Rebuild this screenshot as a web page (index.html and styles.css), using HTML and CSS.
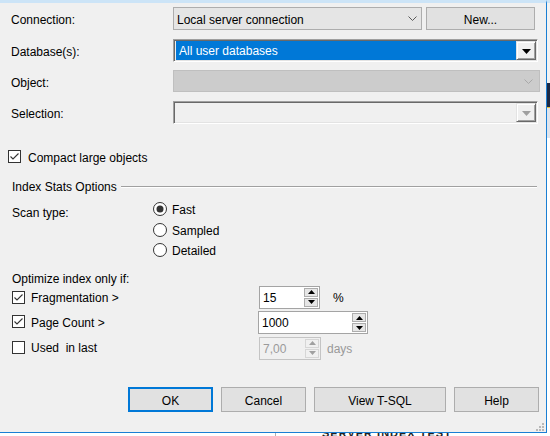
FILE: index.html
```html
<!DOCTYPE html>
<html>
<head>
<meta charset="utf-8">
<link rel="stylesheet" href="styles.css">
</head>
<body>
<div class="screen">
  <div class="main">
    <div class="dialog">
      <div class="form">
        <div class="lbl">Connection:</div>
        <div class="conn-row">
          <div class="combo flat">
            <span class="ctext">Local server connection</span>
            <svg class="chev" width="9" height="5" viewBox="0 0 9 5"><path d="M0.5 0.5 L4.5 4.5 L8.5 0.5" fill="none" stroke="#5a5a5a"/></svg>
          </div>
          <div class="btn new"><span class="btext">New...</span></div>
        </div>

        <div class="lbl">Database(s):</div>
        <div class="combo3d">
          <div class="selected">All user databases</div>
          <div class="ddbtn"><svg width="9" height="5" viewBox="0 0 9 5"><path d="M0 0 H9 L4.5 5 Z" fill="#000"/></svg></div>
        </div>

        <div class="lbl">Object:</div>
        <div class="combo disabled">
          <svg class="chev" width="9" height="5" viewBox="0 0 9 5"><path d="M0.5 0.5 L4.5 4.5 L8.5 0.5" fill="none" stroke="#a8a8a8"/></svg>
        </div>

        <div class="lbl">Selection:</div>
        <div class="combo3d">
          <div class="empty"></div>
          <div class="ddbtn"><svg width="9" height="5" viewBox="0 0 9 5"><path d="M0 0 H9 L4.5 5 Z" fill="#a0a0a0"/></svg></div>
        </div>
      </div>

      <div class="check-row compact">
        <svg class="cb" width="13" height="13" viewBox="0 0 13 13"><rect x="0.5" y="0.5" width="12" height="12" fill="#fff" stroke="#333"/><path d="M2.5 6.5 L5 9 L10.5 3.5" fill="none" stroke="#333" stroke-width="1.1"/></svg>
        <span class="t1">Compact large objects</span>
      </div>

      <div class="group-head">
        <span class="t1">Index Stats Options</span>
        <div class="rule"></div>
      </div>

      <div class="scan">
        <div class="scan-lbl">Scan type:</div>
        <div class="radios">
          <div class="radio">
            <svg width="14" height="14" viewBox="0 0 14 14"><circle cx="7" cy="7" r="6.5" fill="#fff" stroke="#333"/><circle cx="7" cy="7" r="3.5" fill="#333"/></svg>
            <span class="t1">Fast</span>
          </div>
          <div class="radio mid">
            <svg width="14" height="14" viewBox="0 0 14 14"><circle cx="7" cy="7" r="6.5" fill="#fff" stroke="#333"/></svg>
            <span class="t1">Sampled</span>
          </div>
          <div class="radio">
            <svg width="14" height="14" viewBox="0 0 14 14"><circle cx="7" cy="7" r="6.5" fill="#fff" stroke="#333"/></svg>
            <span class="t1">Detailed</span>
          </div>
        </div>
      </div>

      <div class="opt-lbl">Optimize index only if:</div>

      <div class="options">
        <div class="check-row opt">
          <svg class="cb" width="13" height="13" viewBox="0 0 13 13"><rect x="0.5" y="0.5" width="12" height="12" fill="#fff" stroke="#333"/><path d="M2.5 6.5 L5 9 L10.5 3.5" fill="none" stroke="#333" stroke-width="1.1"/></svg>
          <span class="t1">Fragmentation &gt;</span>
        </div>
        <div class="spin-cell">
          <div class="spin w61">
            <div class="val">15</div>
            <div class="arrows">
              <div class="arr"><svg width="7" height="4" viewBox="0 0 7 4"><path d="M0 4 H7 L3.5 0 Z" fill="#000"/></svg></div>
              <div class="arr"><svg width="7" height="4" viewBox="0 0 7 4"><path d="M0 0 H7 L3.5 4 Z" fill="#000"/></svg></div>
            </div>
          </div>
          <span class="unit pct">%</span>
        </div>

        <div class="check-row opt r2">
          <svg class="cb" width="13" height="13" viewBox="0 0 13 13"><rect x="0.5" y="0.5" width="12" height="12" fill="#fff" stroke="#333"/><path d="M2.5 6.5 L5 9 L10.5 3.5" fill="none" stroke="#333" stroke-width="1.1"/></svg>
          <span class="t1">Page Count &gt;</span>
        </div>
        <div class="spin-cell">
          <div class="spin w110">
            <div class="val">1000</div>
            <div class="arrows">
              <div class="arr"><svg width="7" height="4" viewBox="0 0 7 4"><path d="M0 4 H7 L3.5 0 Z" fill="#000"/></svg></div>
              <div class="arr"><svg width="7" height="4" viewBox="0 0 7 4"><path d="M0 0 H7 L3.5 4 Z" fill="#000"/></svg></div>
            </div>
          </div>
        </div>

        <div class="check-row opt r3">
          <svg class="cb" width="13" height="13" viewBox="0 0 13 13"><rect x="0.5" y="0.5" width="12" height="12" fill="#fff" stroke="#333"/></svg>
          <span class="t1">Used&nbsp; in last</span>
        </div>
        <div class="spin-cell">
          <div class="spin w62 off">
            <div class="val">7,00</div>
            <div class="arrows">
              <div class="arr"><svg width="7" height="4" viewBox="0 0 7 4"><path d="M0 4 H7 L3.5 0 Z" fill="#a0a0a0"/></svg></div>
              <div class="arr"><svg width="7" height="4" viewBox="0 0 7 4"><path d="M0 0 H7 L3.5 4 Z" fill="#a0a0a0"/></svg></div>
            </div>
          </div>
          <span class="unit days">days</span>
        </div>
      </div>

      <div class="buttons">
        <div class="btn dlg default"><span class="btext">OK</span></div>
        <div class="btn dlg"><span class="btext">Cancel</span></div>
        <div class="btn dlg wide"><span class="btext">View T-SQL</span></div>
        <div class="btn dlg"><span class="btext">Help</span></div>
      </div>

      <svg class="grip" width="8" height="8" viewBox="0 0 8 8">
        <rect x="6" y="0" width="2" height="2" fill="#b8b8b8"/>
        <rect x="3" y="3" width="2" height="2" fill="#b8b8b8"/>
        <rect x="6" y="3" width="2" height="2" fill="#b8b8b8"/>
        <rect x="0" y="6" width="2" height="2" fill="#b8b8b8"/>
        <rect x="3" y="6" width="2" height="2" fill="#b8b8b8"/>
        <rect x="6" y="6" width="2" height="2" fill="#b8b8b8"/>
      </svg>
    </div>
    <div class="side">
      <div class="s-top"></div>
      <div class="s-light"></div>
      <div class="s-navy"></div>
      <div class="s-blue"></div>
      <div class="s-white"></div>
    </div>
  </div>
  <div class="bottom">
    <div class="b-left"></div>
    <div class="b-right"><span class="b-text">SERVER INDEX TEST</span></div>
  </div>
</div>
</body>
</html>
```

FILE: styles.css
```css
* { box-sizing: border-box; }
html, body { margin: 0; padding: 0; }
body {
  font-family: "Liberation Sans", Arial, sans-serif;
  font-size: 12px;
  color: #000;
  background: #fff;
}
.screen {
  width: 550px;
  height: 436px;
  overflow: hidden;
  display: flex;
  flex-direction: column;
}
.main {
  display: flex;
  height: 433px;
}
.dialog {
  position: relative;
  width: 547px;
  height: 433px;
  background: #f0f0f0;
  border-top: 3px solid #cce4f7;
  border-right: 1px solid #1a7fd4;
  border-bottom: 1px solid #1a7fd4;
}
.t1 { position: relative; top: 1px; }
.btext { position: relative; top: 1px; }

/* top form */
.form {
  display: grid;
  grid-template-columns: 162px auto;
  grid-template-rows: 32px 31px 31px 24px;
  align-items: start;
  padding: 4px 0 0 11px;
}
.lbl {
  line-height: 23px;
  height: 23px;
  padding-top: 2px;
}
.conn-row { display: flex; }
.combo {
  display: flex;
  align-items: center;
  justify-content: space-between;
  height: 23px;
  border: 1px solid #adadad;
  padding: 0 4px 0 3px;
}
.ctext { position: relative; top: 1px; }
.combo.flat {
  width: 249px;
  background: #e5e5e5;
}
.combo.disabled {
  width: 367px;
  height: 22px;
  background: #cccccc;
  border-color: #bfbfbf;
  justify-content: flex-end;
  padding-right: 6px;
}
.chev { display: block; }
.btn {
  display: flex;
  align-items: center;
  justify-content: center;
  background: #e1e1e1;
  border: 1px solid #adadad;
}
.btn.new {
  width: 109px;
  height: 23px;
  margin-left: 4px;
}
.combo3d {
  display: flex;
  width: 365px;
  height: 23px;
  border: 1px solid;
  border-color: #a0a0a0 #ffffff #ffffff #a0a0a0;
  box-shadow: inset 1px 1px 0 #696969, inset -1px -1px 0 #e3e3e3;
  padding: 1px;
  background: #f0f0f0;
}
.selected {
  flex: 1;
  margin-left: 1px;
  background: #0078d7;
  color: #fff;
  line-height: 19px;
  padding: 1px 0 0 3px;
}
.empty { flex: 1; }
.ddbtn {
  width: 20px;
  height: 19px;
  display: flex;
  align-items: center;
  justify-content: center;
  background: #f0f0f0;
  border: 1px solid;
  border-color: #e3e3e3 #696969 #696969 #e3e3e3;
  box-shadow: inset 1px 1px 0 #ffffff, inset -1px -1px 0 #a0a0a0;
}
.ddbtn svg { display: block; margin-top: 1px; }

/* checkboxes */
.check-row {
  display: flex;
  align-items: center;
}
.cb { display: block; flex: none; }
.compact {
  margin-top: 25px;
  height: 13px;
  padding-left: 8px;
  gap: 7px;
}

/* group header */
.group-head {
  display: flex;
  align-items: center;
  margin: 16px 9px 0 12px;
  height: 14px;
  gap: 4px;
}
.rule {
  flex: 1;
  height: 2px;
  border-top: 1px solid #a0a0a0;
  border-bottom: 1px solid #ffffff;
  margin-top: 1px;
}

/* scan type */
.scan {
  display: flex;
  margin-top: 6px;
  padding-left: 12px;
}
.scan-lbl {
  width: 141px;
  padding-top: 6px;
  line-height: 17px;
}
.radios {
  display: flex;
  flex-direction: column;
}
.radio {
  display: flex;
  align-items: center;
  gap: 5px;
  height: 20px;
}
.radio.mid { height: 21px; }
.radio svg { display: block; }

/* optimize */
.opt-lbl {
  margin-top: 11px;
  padding: 2px 0 0 12px;
  height: 13px;
  line-height: 13px;
}
.options {
  display: grid;
  grid-template-columns: 247px auto;
  grid-template-rows: 26px 25px 26px;
  align-items: center;
  padding-left: 12px;
}
.opt { gap: 6px; }
.opt.r2 { position: relative; top: -1px; }
.opt.r3 { position: relative; top: -1px; }
.spin-cell {
  display: flex;
  align-items: center;
}
.spin {
  display: flex;
  height: 23px;
  border: 1px solid #a4a4a4;
  background: #fff;
  padding: 1px;
}
.spin.w61 { width: 61px; }
.spin.w110 { width: 110px; margin-left: -1px; }
.spin.w62 { width: 62px; }
.spin .val {
  flex: 1;
  padding: 1px 0 0 2px;
  line-height: 19px;
}
.arrows {
  display: flex;
  flex-direction: column;
  width: 14px;
  gap: 1px;
}
.arr {
  flex: 1;
  display: flex;
  align-items: center;
  justify-content: center;
  background: #e6e6e6;
  border: 1px solid #adadad;
}
.arr svg { display: block; }
.spin.off {
  background: #f0f0f0;
  border-color: #c4c4c4;
}
.spin.off .val { color: #9a9a9a; }
.spin.off .arr {
  background: #f0f0f0;
  border-color: #d6d6d6;
}
.unit { position: relative; top: 1px; }
.unit.pct { margin-left: 13px; }
.unit.days { margin-left: 6px; color: #999999; }

/* buttons */
.buttons {
  display: flex;
  justify-content: flex-end;
  gap: 8px;
  margin-top: 26px;
  padding-right: 7px;
}
.btn.dlg {
  width: 85px;
  height: 25px;
}
.btn.dlg.wide { width: 132px; }
.btn.default {
  border: 2px solid #0078d7;
}
.grip {
  position: absolute;
  right: 2px;
  bottom: 1px;
}

/* background app strip */
.side {
  width: 3px;
  display: flex;
  flex-direction: column;
}
.s-top { height: 3px; background: #cce4f7; }
.s-light { height: 80px; background: #f3f3f3; }
.s-navy { height: 25px; background: #1d2a45; border-bottom: 1px solid #e8c33a; }
.s-blue { height: 30px; background: #dfe5ee; }
.s-white {
  flex: 1;
  background: #fff;
}
.bottom {
  display: flex;
  height: 3px;
}
.b-left { width: 276px; background: #ffffff; border-right: 1px solid #b0b0b0; }
.b-right {
  flex: 1;
  background: #fff;
  overflow: hidden;
  position: relative;
}
.b-text {
  position: absolute;
  left: 46px;
  top: -6px;
  font-size: 11px;
  font-weight: bold;
  color: #222;
  letter-spacing: 1px;
}
```
